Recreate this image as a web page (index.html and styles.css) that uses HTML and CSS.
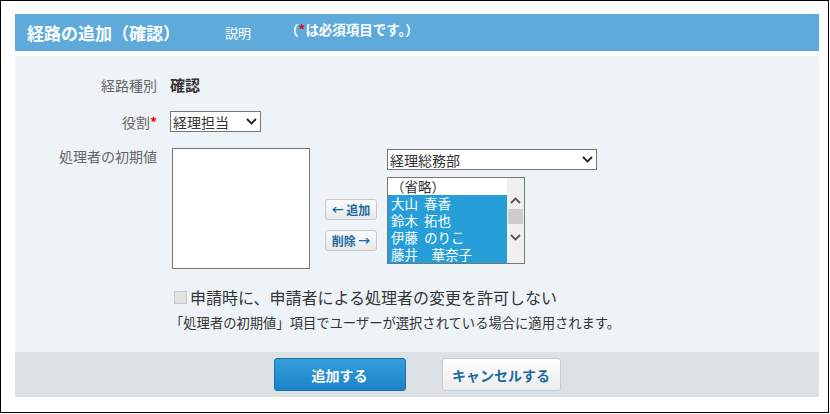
FILE: index.html
```html
<!DOCTYPE html>
<html lang="ja">
<head>
<meta charset="utf-8">
<title>経路の追加（確認）</title>
<link rel="stylesheet" href="styles.css">
</head>
<body>
<div class="frame">
  <div class="header">
    <h1 class="title">経路の追加（確認）</h1>
    <span class="help">説明</span>
    <span class="req-note">（<span class="req">*</span>は必須項目です。）</span>
  </div>
  <div class="panel">
    <div class="row row-type">
      <div class="label">経路種別</div>
      <div class="value strong">確認</div>
    </div>
    <div class="row row-role">
      <div class="label">役割<span class="req">*</span></div>
      <div class="select select-role">
        <span>経理担当</span>
        <svg class="chev" width="11" height="7" viewBox="0 0 11 7"><path d="M1 1 L5.5 5.5 L10 1" fill="none" stroke="#222" stroke-width="1.8"/></svg>
      </div>
    </div>
    <div class="row row-users">
      <div class="label label-top">処理者の初期値</div>
      <div class="users">
        <div class="listbox listbox-chosen"></div>
        <div class="move-buttons">
          <button class="btn-small">← 追加</button>
          <button class="btn-small">削除 →</button>
        </div>
        <div class="picker">
          <div class="select select-group">
            <span>経理総務部</span>
            <svg class="chev" width="11" height="7" viewBox="0 0 11 7"><path d="M1 1 L5.5 5.5 L10 1" fill="none" stroke="#222" stroke-width="1.8"/></svg>
          </div>
          <div class="listbox listbox-candidates">
            <ul class="options">
              <li class="opt">（省略）</li>
              <li class="opt selected">大山&nbsp;春香</li>
              <li class="opt selected">鈴木&nbsp;拓也</li>
              <li class="opt selected">伊藤&nbsp;のりこ</li>
              <li class="opt selected">藤井　華奈子</li>
            </ul>
            <div class="scrollbar">
              <svg class="sb-arrow" width="11" height="7" viewBox="0 0 11 7"><path d="M1 6 L5.5 1.5 L10 6" fill="none" stroke="#555" stroke-width="1.8"/></svg>
              <div class="sb-thumb"></div>
              <svg class="sb-arrow" width="11" height="7" viewBox="0 0 11 7"><path d="M1 1 L5.5 5.5 L10 1" fill="none" stroke="#555" stroke-width="1.8"/></svg>
            </div>
          </div>
        </div>
      </div>
    </div>
    <div class="row row-check">
      <div class="label"></div>
      <label class="check"><span class="box"></span>申請時に、申請者による処理者の変更を許可しない</label>
    </div>
    <div class="row row-note">
      <div class="label"></div>
      <p class="note">「処理者の初期値」項目でユーザーが選択されている場合に適用されます。</p>
    </div>
  </div>
  <div class="footer">
    <button class="btn btn-primary">追加する</button>
    <button class="btn btn-cancel">キャンセルする</button>
  </div>
</div>
</body>
</html>
```

FILE: styles.css
```css
* { box-sizing: border-box; }
html, body {
  margin: 0;
  padding: 0;
  background: #fff;
}
body {
  font-family: "Noto Sans CJK JP", "Noto Sans", "Liberation Sans", sans-serif;
  color: #333;
}
.frame {
  width: 829px;
  height: 413px;
  border: 1px solid #000;
  padding: 13px 9px 0 14px;
  background: #fff;
}
.header {
  height: 37px;
  background: #5eabdb;
  display: flex;
  align-items: center;
  padding-left: 12px;
  color: #fff;
}
.title {
  margin: 0;
  font-size: 17px;
  font-weight: bold;
  line-height: 20px;
  width: 153px;
  white-space: nowrap;
}
.help {
  margin-left: 45px;
  font-size: 13px;
  line-height: 16px;
  margin-top: 1px;
}
.req-note {
  margin-left: 34px;
  font-size: 13.5px;
  font-weight: bold;
  line-height: 16px;
  margin-bottom: 7px;
}
.req { color: #e60012; font-weight: bold; }
.panel {
  margin-top: 5px;
  height: 296px;
  background: #eef3f7;
  padding-top: 19px;
}
.row {
  display: flex;
  align-items: center;
}
.label {
  width: 155px;
  flex: none;
  text-align: right;
  padding-right: 13px;
  font-size: 14px;
  line-height: 18px;
  color: #666;
  white-space: nowrap;
}
.value.strong {
  font-size: 15px;
  font-weight: bold;
  line-height: 20px;
  color: #333;
}
.row-role { margin-top: 16px; }
.select {
  display: flex;
  align-items: center;
  justify-content: space-between;
  height: 21px;
  background: #fff;
  border: 1px solid #767676;
  padding: 0 3px 0 2px;
  font-size: 14px;
  line-height: 18px;
  color: #333;
}
.select-role { width: 91px; }
.chev { flex: none; }
.row-users {
  margin-top: 16px;
  align-items: flex-start;
}
.label-top { margin-top: -1px; }
.users {
  display: flex;
  align-items: flex-start;
}
.listbox {
  background: #fff;
  border: 1px solid #767676;
}
.listbox-chosen {
  width: 138px;
  height: 121px;
  margin-left: 2px;
}
.move-buttons {
  display: flex;
  flex-direction: column;
  gap: 10px;
  padding-top: 51px;
  margin-left: 15px;
}
.btn-small {
  width: 52px;
  height: 21px;
  padding: 0;
  border: 1px solid #c5c9cd;
  border-radius: 3px;
  background: linear-gradient(#fbfbfb, #e9e9e9);
  font-family: inherit;
  font-size: 12px;
  font-weight: bold;
  line-height: 16px;
  color: #1c6aa2;
  white-space: nowrap;
}
.picker {
  margin-left: 10px;
  padding-top: 1px;
}
.select-group { width: 210px; }
.listbox-candidates {
  margin-top: 7px;
  width: 138px;
  height: 87px;
  display: flex;
  overflow: hidden;
}
.options {
  list-style: none;
  margin: 0;
  padding: 0;
  flex: 1;
}
.opt {
  height: 17px;
  line-height: 17px;
  font-size: 13.5px;
  padding-left: 3px;
  white-space: nowrap;
  color: #333;
  word-spacing: 3px;
}
.opt.selected {
  background: #269fd9;
  color: #fff;
}
.scrollbar {
  width: 17px;
  flex: none;
  background: #f0f0f0;
  display: flex;
  flex-direction: column;
  align-items: center;
  padding-top: 19px;
}
.sb-thumb {
  width: 15px;
  height: 15px;
  background: #cdcdcd;
  margin: 5px 0 10px;
}
.row-check { margin-top: 18px; }
.check {
  display: flex;
  align-items: center;
  font-size: 16px;
  line-height: 20px;
  color: #333;
  white-space: nowrap;
}
.box {
  width: 13px;
  height: 13px;
  margin-left: 4px;
  margin-right: 3px;
  background: #e3e3e3;
  border: 1px solid #c8c8c8;
}
.row-note { margin-top: 7px; }
.note {
  margin: 0;
  font-size: 13.3px;
  line-height: 18px;
  color: #333;
  white-space: nowrap;
}
.footer {
  height: 45px;
  background: #dce1e5;
  display: flex;
  justify-content: center;
  align-items: flex-start;
  gap: 36px;
  padding-top: 6px;
}
.btn {
  height: 33px;
  border-radius: 3px;
  font-family: inherit;
  font-size: 14px;
  font-weight: bold;
  line-height: 18px;
  padding: 0;
}
.btn-primary {
  width: 132px;
  border: 1px solid #1b6fa8;
  background: linear-gradient(#379ddb, #1a83c8);
  color: #fff;
}
.btn-cancel {
  width: 119px;
  border: 1px solid #c8cbce;
  background: linear-gradient(#ffffff, #ececec);
  color: #1c6aa2;
}
```
